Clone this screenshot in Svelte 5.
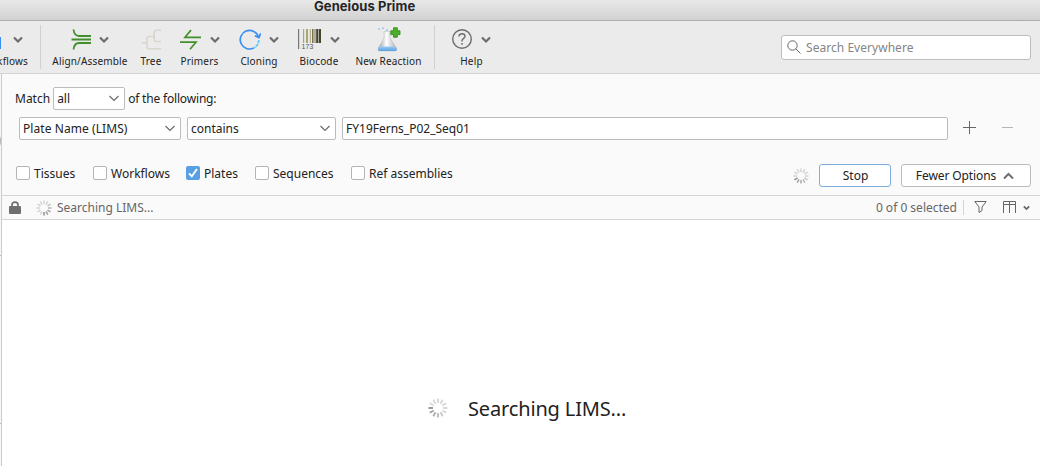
<script>
  const filters = [
    { name: 'Tissues', on: false, width: 77 },
    { name: 'Workflows', on: false, width: 93 },
    { name: 'Plates', on: true, width: 69 },
    { name: 'Sequences', on: false, width: 96 },
    { name: 'Ref assemblies', on: false, width: 120 }
  ];
  const spokes = Array.from({ length: 12 }, (_, i) => i);
  const shade = (i, head) => 0.15 + 0.27 * Math.max(0, 1 - ((head - i + 12) % 12) / 5);
</script>

{#snippet caret()}
  <svg class="caret" width="10" height="8" viewBox="0 0 10 8"><path d="M1 1.5 5 5.5 9 1.5" fill="none" stroke="#6c6c6c" stroke-width="2.2" /></svg>
{/snippet}

{#snippet thin()}
  <svg width="10" height="7" viewBox="0 0 10 7"><path d="M.5 1 5 5.5 9.500 1" fill="none" stroke="#666" stroke-width="1.1" /></svg>
{/snippet}

{#snippet spinner(size, head)}
  <svg width={size} height={size} viewBox="0 0 20 20">
    {#each spokes as i}
      <path d="M10 .5V5" stroke="#000" stroke-width="1.9" opacity={shade(i, head)} transform="rotate({i * 30} 10 10)" />
    {/each}
  </svg>
{/snippet}

<div class="window">
  <header class="title"><span>Geneious Prime</span></header>

  <nav class="toolbar">
    <div class="tool first">
      <div class="icon"><i class="doc"></i>{@render caret()}</div>
      <span>Workflows</span>
    </div>
    <div class="sep"></div>
    <div class="tool">
      <div class="icon wide">
        <svg width="20" height="22" viewBox="0 0 20 22" fill="none" stroke="#438f2c" stroke-width="1.8"><path d="M2.500 .5C3 4.500 4.500 7 8 7H20M.5 10.500H20M2.500 20.500C3 16.500 4.500 14 8 14H20" /></svg>
        {@render caret()}
      </div>
      <span>Align/Assemble</span>
    </div>
    <div class="tool">
      <div class="icon">
        <svg width="20" height="22" viewBox="0 0 20 22" fill="none" stroke="#d9d5cb" stroke-width="1.5"><path d="M.5 13.700H6M20 19.700H8Q6 19.700 6 17.500V9.500Q6 7.500 8 7.500H13.200M20 1.200H15.200Q13.200 1.200 13.200 3.200V10.500Q13.200 12.500 15.200 12.500H20" /></svg>
      </div>
      <span>Tree</span>
    </div>
    <div class="tool">
      <div class="icon">
        <svg width="22" height="22" viewBox="0 0 22 22" fill="none" stroke="#438f2c" stroke-width="1.7"><path d="M22 8.300H6L12 1.100M1 13.200H17L11 20.200" /></svg>
        {@render caret()}
      </div>
      <span>Primers</span>
    </div>
    <div class="tool">
      <div class="icon wide">
        <svg width="22" height="22" viewBox="0 0 22 22" fill="none" stroke="#398ef3" stroke-width="1.700"><path d="M14.700 19A9.300 9.300 0 1 1 19.300 7.500M15.800 6.800 19.900 8.600 21.700 4.300" /><path d="M19.800 11A9.300 9.300 0 0 1 15 18.900" stroke="#65c6f5" stroke-dasharray="3.200 .7" /></svg>
        {@render caret()}
      </div>
      <span>Cloning</span>
    </div>
    <div class="tool">
      <div class="icon">
        <svg class="bars" width="23" height="22" viewBox="0 0 23 22"><path d="M0 0H1.200V20H0Z" fill="#777" /><path d="M5 0H6.200V14H5ZM8 0H10V14H8ZM11.800 0H12.800V14H11.800Z" fill="#a9a675" /><path d="M14 0H15.500V14H14ZM16.500 0H17.500V14H16.500Z" fill="#77734d" /><path d="M18.200 0H20.200V14H18.200ZM20.800 0H23V14H20.800Z" fill="#45432e" /><text x="3.500" y="20" textLength="12" lengthAdjust="spacingAndGlyphs" font-family="Liberation Sans" font-size="6.500" fill="#555">173</text></svg>
        {@render caret()}
      </div>
      <span>Biocode</span>
    </div>
    <div class="tool">
      <div class="icon reaction">
        <svg class="flask" width="24" height="26" viewBox="0 0 24 26">
          <defs><linearGradient id="glass"><stop offset="0" stop-color="#9d9d9d" /><stop offset=".45" stop-color="#fff" /><stop offset="1" stop-color="#a9a9a9" /></linearGradient><linearGradient id="fluid" x2="0" y2="1"><stop offset="0" stop-color="#9bcbf6" /><stop offset="1" stop-color="#5b9fe4" /></linearGradient></defs>
          <path d="M7 4.500H13V11L19.500 21Q20.500 24 18 24H3Q.5 24 1.300 21L7 11Z" fill="url(#glass)" stroke="#bdbdbd" stroke-width=".5" />
          <path d="M2 19.500H18.500L19.700 22Q20 24 18 24H3Q.5 24 1.200 21.500Z" fill="url(#fluid)" />
          <path d="M1 2H3M5 1.300H7M9 3H11" stroke="#9ac8ef" stroke-width="1.500" />
          <path d="M16.500 .8H20.300V3.800H23V7.600H20.300V10.200H16.500V7.600H13.800V3.800H16.500Z" fill="#4caf2b" stroke="#368d1b" stroke-width=".9" />
        </svg>
      </div>
      <span>New Reaction</span>
    </div>
    <div></div>
    <div class="sep"></div>
    <div class="tool">
      <div class="icon">
        <svg width="20" height="22" viewBox="0 0 20 22" fill="none" stroke="#6d6d6d" stroke-width="1.4"><circle cx="10" cy="10" r="9.300" /><path d="M7 7.500Q7 4.700 10 4.700T13 7.300C13 9.600 10 9.300 10 12V12.500M10 14V15.700" stroke-width="1.400" /></svg>
        {@render caret()}
      </div>
      <span>Help</span>
    </div>
    <div class="search">
      <svg width="15" height="15" viewBox="0 0 15 15" fill="none" stroke="#666"><circle cx="5.500" cy="5.500" r="4.700" /><path d="M8.900 8.900 13.500 13.500" /></svg>
      <span>Search Everywhere</span>
    </div>
  </nav>

  <div class="body">
    <aside><i class="knob"></i><i class="tick"></i><i class="tick low"></i></aside>
    <main>
      <section class="query">
        <div class="match"><span>Match</span>
          <div class="box all"><span>all</span>{@render thin()}</div>
          <span class="tail">of the following:</span>
        </div>
        <div class="rule">
          <div class="box field"><span>Plate Name (LIMS)</span>{@render thin()}</div>
          <div class="box op"><span>contains</span>{@render thin()}</div>
          <div class="box value"><span>FY19Ferns_P02_Seq01</span></div>
          <svg class="plus" width="13" height="13" viewBox="0 0 13 13"><path d="M6.500 0V13M0 6.500H13" stroke="#666" /></svg>
          <svg class="minus" width="12" height="13" viewBox="0 0 12 13"><path d="M0 6.500H11" stroke="#b5b5b5" /></svg>
        </div>
        <div class="options">
          {#each filters as f}
            <div class="check" style="width: {f.width}px">
              <i class:on={f.on}>{#if f.on}<svg width="14" height="14" viewBox="0 0 14 14"><path d="M3 7.300 5.800 10.300 11 3" fill="none" stroke="#fff" stroke-width="1.900" /></svg>{/if}</i>
              <span>{f.name}</span>
            </div>
          {/each}
          <div class="busy">{@render spinner(16, 8)}</div>
          <div class="button stop"><span>Stop</span></div>
          <div class="button fewer"><span>Fewer Options</span>
            <svg width="11" height="8" viewBox="0 0 11 8"><path d="M1 6.500 5.500 2 10 6.500" fill="none" stroke="#707070" stroke-width="2" /></svg>
          </div>
        </div>
      </section>
      <section class="status">
        <svg class="lock" width="12" height="14" viewBox="0 0 12 14"><path d="M3 6V4Q3 1.200 6 1.200T9 4V6" fill="none" stroke="#6f6f6f" stroke-width="1.700" /><rect y="5" width="12" height="8" rx="1" fill="#6f6f6f" /></svg>
        {@render spinner(16, 6)}
        <span class="msg">Searching LIMS...</span>
        <span class="count">0 of 0 selected</span>
        <i class="line"></i>
        <svg class="funnel" width="13" height="13" viewBox="0 0 13 13"><path d="M.8 .5H12.200L8 6V9.500L5 11.500V6Z" fill="none" stroke="#666" /></svg>
        <svg class="cols" width="13" height="13" viewBox="0 0 13 13"><path d="M.5 12V.5H12.500V12M.5 3.500H12.500M6.500 .5V12" fill="none" stroke="#666" /></svg>
        <svg class="mini" width="7" height="6" viewBox="0 0 7 6"><path d="M.8 1.300 3.500 4 6.200 1.300" fill="none" stroke="#666" stroke-width="1.700" /></svg>
      </section>
      <section class="results">
        {@render spinner(20, 9)}
        <span>Searching LIMS...</span>
      </section>
    </main>
  </div>
</div>

<style>
  :global(body) { margin: 0; overflow: hidden; }
  * { box-sizing: border-box; }
  svg { display: block; flex: none; }
  span { white-space: nowrap; }
  .window { width: 1040px; height: 466px; display: flex; flex-direction: column; overflow: hidden; font: 12px/16px "Noto Sans", sans-serif; color: #222; background: #fff; }
  .title { height: 21px; flex: none; background: linear-gradient(#e8e8e8, #d2d2d2); border-bottom: 1px solid #acacac; padding-left: 314px; font: bold 13px/13px Inter, sans-serif; color: #262626; letter-spacing: .07px; }
  .title span { display: block; }
  .toolbar { height: 53px; flex: none; background: #ebebeb; border-bottom: 1px solid #d4d4d4; display: grid; grid-template-columns: 40px 1px 98px 24px 73px 46px 74px 65px 13px 1px 73px 1fr; }
  .tool { display: flex; flex-direction: column; align-items: center; padding-top: 5px; font-size: 10px; line-height: 14px; letter-spacing: .17px; }
  .tool .icon { height: 28px; display: flex; align-items: center; justify-content: center; gap: 9px; margin-right: 1px; }
  .tool .wide { margin-right: 0; gap: 8px; }
  .tool .reaction { margin-right: -1px; }
  .tool.first { align-items: flex-end; padding-right: 12px; }
  .first .icon { padding-right: 5px; gap: 12px; margin-right: 0; align-self: flex-start; padding-left: 0; }
  .doc { width: 1px; height: 12px; margin-top: 5px; background: #398ef3; }
  .sep { width: 1px; height: 44px; margin-top: 4px; background: #d0d0d0; }
  .search { width: 250px; height: 25px; margin: 14px 9px 0 auto; display: flex; align-items: center; border: 1px solid #bebebe; border-radius: 3px; background: #fff; padding-left: 5px; gap: 4px; color: #858585; letter-spacing: .04px; }
  .body { flex: 1; display: flex; min-height: 0; }
  aside { width: 2px; flex: none; background: #f7f7f7; border-right: 1px solid #cbcbcb; overflow: hidden; }
  .knob { display: block; width: 10px; height: 12px; margin: 61px 0 0 -9px; border: 1px solid #bbb; border-radius: 4px; }
  .tick { display: block; height: 1px; background: #bbb; margin-top: 108px; }
  .low { margin-top: 167px; }
  main { flex: 1; display: flex; flex-direction: column; min-width: 0; }
  .query { height: 121px; flex: none; background: #fafafa; padding: 13px 9px 0 13px; }
  .match { display: flex; align-items: center; height: 23px; }
  .tail { letter-spacing: -.18px; }
  .box { height: 23px; border: 1px solid #bcbcbc; border-radius: 2px; background: #fff; display: flex; align-items: center; justify-content: space-between; padding: 0 5px 0 3px; }
  .all { width: 72px; margin: 0 3px; }
  .rule { display: flex; align-items: center; height: 23px; margin-top: 7px; padding-left: 4px; }
  .field { width: 162px; }
  .field span { letter-spacing: .07px; }
  .op { width: 149px; margin: 0 6px; }
  .value { width: 606px; }
  .plus { margin-left: 15px; margin-top: -2px; }
  .minus { margin-left: 26px; margin-top: -2px; }
  .options { display: flex; align-items: center; height: 23px; margin-top: 24px; padding-left: 1px; }
  .check { display: flex; align-items: center; gap: 4px; flex: none; height: 19px; align-self: flex-start; }
  .check i { width: 14px; height: 14px; flex: none; margin-top: -1px; border: 1px solid #b5b5b5; border-radius: 2px; background: #fff; }
  .check i.on { border: 0; background: #589fe4; }
  .busy { margin: 0 10px 0 auto; }
  .button { height: 23px; border: 1px solid #bcbcbc; border-radius: 3px; background: #fff; display: flex; align-items: center; justify-content: center; }
  .stop { width: 72px; border-color: #7eaddb; margin-right: 10px; padding-left: 1px; }
  .fewer { width: 130px; gap: 7px; padding-right: 2px; }
  .fewer span { letter-spacing: -.1px; }
  .status { height: 25px; flex: none; border-top: 1px solid #d4d4d4; border-bottom: 1px solid #d4d4d4; background: #fafafa; display: flex; align-items: center; padding: 0 10px 0 7px; color: #666; }
  .lock { margin-right: 15px; }
  .msg { margin-left: 5px; }
  .count { margin-left: auto; }
  .line { width: 1px; height: 15px; margin: 0 10px 0 6px; background: #d5d5d5; }
  .cols { margin-left: 16px; }
  .mini { margin-left: 7px; }
  .results { flex: 1; display: flex; align-items: flex-start; padding: 175px 0 0 426px; font-size: 20px; line-height: 28px; letter-spacing: -.15px; }
  .results :global(svg) { margin-top: 3px; margin-right: 20px; }
</style>
